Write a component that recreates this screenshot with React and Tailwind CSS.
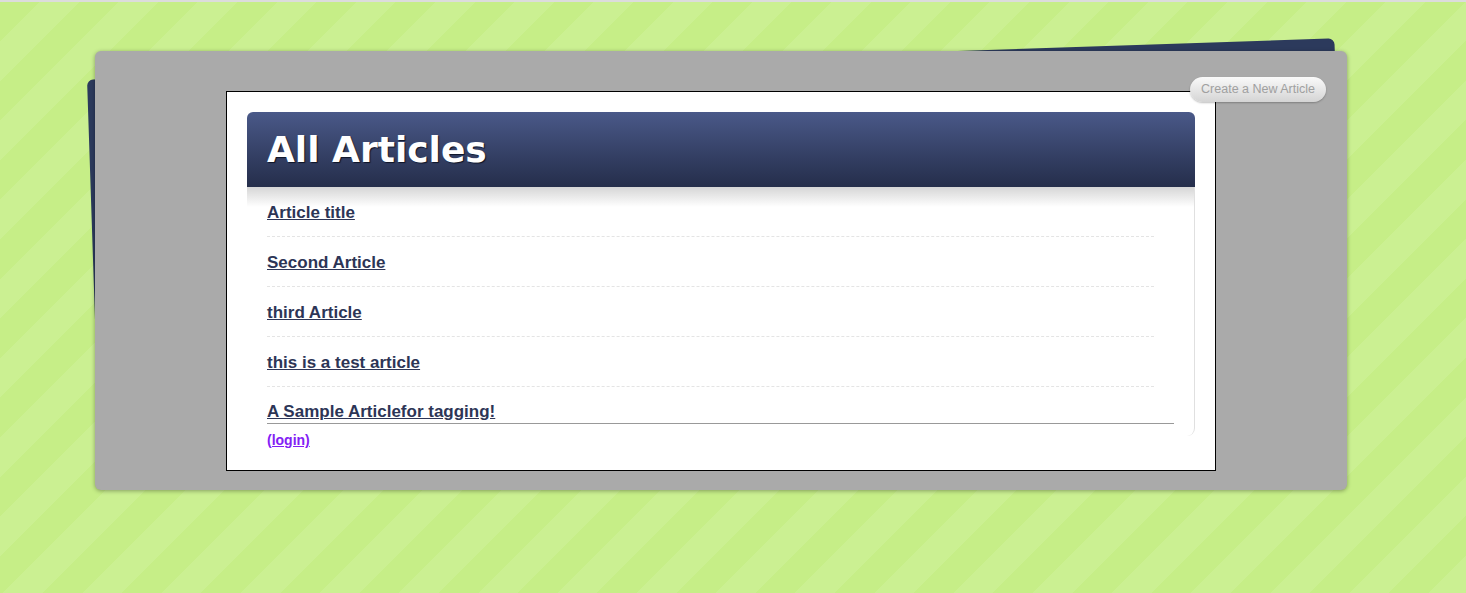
import React from "react";

const articles = [
  "Article title",
  "Second Article",
  "third Article",
  "this is a test article",
];

function App() {
  return (
    <div className="min-h-[593px] border-t-2 border-[#dcdcdc] bg-[repeating-linear-gradient(135deg,#c6ee87_0px,#c6ee87_28px,#cbf092_28px,#cbf092_56px)] pt-[49px] font-['Liberation_Sans',Arial,sans-serif]">
      <div className="relative ml-[95px] w-[1252px]">
        {/* tilted back card */}
        <div className="absolute left-[-2px] top-[8px] h-[380px] w-[1248px] -rotate-[1.9deg] rounded-md bg-[#2c3a5c]" />

        <div className="relative h-[439px] rounded-md bg-[#aaaaaa] px-[131px] pt-[40px] shadow-[0_1px_4px_rgba(0,0,0,0.35)]">
          <a
            href="#"
            className="absolute right-[21px] top-[26px] z-10 rounded-full bg-gradient-to-b from-[#fafafa] to-[#d4d4d4] px-[11px] py-[5px] text-[12.5px] leading-[15px] text-[#a0a0a0] no-underline shadow-[0_1px_2px_rgba(0,0,0,0.25)]"
          >
            Create a New Article
          </a>

          <div className="border border-black bg-white p-[20px] pb-[34px]">
            <div className="flex h-[75px] items-center rounded-t-md bg-gradient-to-b from-[#4a5989] to-[#252e4b] px-[20px]">
              <h1 className="font-['DejaVu_Sans',sans-serif] text-[36px] font-bold leading-[42px] text-white [text-shadow:1px_1px_1px_#0f1426]">
                All Articles
              </h1>
            </div>

            <div className="relative h-[249px] rounded-br-lg border-r border-[#e0e0e0]">
              <div className="absolute inset-x-0 top-0 h-[20px] bg-gradient-to-b from-[#d6d6d6] to-white" />
              <ul className="relative pl-[20px] pr-[40px]">
                {articles.map((title) => (
                  <li
                    key={title}
                    className="border-b border-dashed border-[#e4e4e4] pb-[13px] pt-[16px] leading-[20px]"
                  >
                    <a href="#" className="text-[17px] font-bold text-[#2d3556] underline">
                      {title}
                    </a>
                  </li>
                ))}
                <li className="pt-[15px] leading-[20px]">
                  <a href="#" className="text-[17px] font-bold text-[#2d3556] underline">
                    A Sample Articlefor tagging!
                  </a>
                </li>
              </ul>
              <div className="relative ml-[20px] mr-[20px] mt-[1px] border-t border-[#999999]" />
              <div className="relative ml-[20px] mt-[8px] leading-[16px]">
                <a href="#" className="text-[14px] font-bold text-[#8320f5] underline">
                  (login)
                </a>
              </div>
            </div>
          </div>
        </div>
      </div>
    </div>
  );
}

export default App;
